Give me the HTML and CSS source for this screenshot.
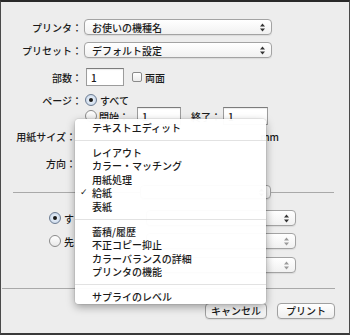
FILE: index.html
```html
<!DOCTYPE html>
<html lang="ja">
<head>
    <meta charset="UTF-8">
    <title>プリント</title>
    <link rel="stylesheet" href="styles.css">
</head>
<body>
    <div class="window">
        <!-- Printer / preset -->
        <div class="row r-printer">
            <span class="label">プリンタ：</span>
            <div class="popup wide">
                <span class="popup-text">お使いの機種名</span>
                <svg class="arrows" width="5" height="9" viewBox="0 0 5 9"><path d="M0 3.6L2.5 0.4L5 3.6Z M0 5.4L2.5 8.6L5 5.4Z"/></svg>
            </div>
        </div>
        <div class="row r-preset">
            <span class="label">プリセット：</span>
            <div class="popup wide">
                <span class="popup-text">デフォルト設定</span>
                <svg class="arrows" width="5" height="9" viewBox="0 0 5 9"><path d="M0 3.6L2.5 0.4L5 3.6Z M0 5.4L2.5 8.6L5 5.4Z"/></svg>
            </div>
        </div>

        <!-- Copies / pages -->
        <div class="row r-copies">
            <span class="label">部数：</span>
            <div class="field copies">1</div>
            <span class="check"></span>
            <span class="after-box">両面</span>
        </div>
        <div class="row r-pages">
            <span class="label">ページ：</span>
            <span class="radio on"></span>
            <span class="after-box">すべて</span>
        </div>
        <div class="row r-range">
            <span class="label"></span>
            <span class="radio"></span>
            <span class="range-text">開始：</span>
            <div class="field from">1</div>
            <span class="range-text to-label">終了：</span>
            <div class="field to">1</div>
        </div>

        <!-- Paper -->
        <div class="row r-paper">
            <span class="label short">用紙サイズ：</span>
            <span class="paper-value">mm</span>
        </div>
        <div class="row r-orient">
            <span class="label short">方向：</span>
        </div>

        <!-- Panel selector (its menu is open) -->
        <div class="row r-section">
            <span class="rule grow"></span>
            <div class="popup panel">
                <span class="popup-text"></span>
                <svg class="arrows" width="5" height="9" viewBox="0 0 5 9"><path d="M0 3.6L2.5 0.4L5 3.6Z M0 5.4L2.5 8.6L5 5.4Z"/></svg>
            </div>
            <span class="rule right"></span>
        </div>

        <div class="row r-feed1">
            <span class="radio on indent"></span>
            <span class="after-box">す</span>
            <div class="popup tray">
                <span class="popup-text"></span>
                <svg class="arrows" width="5" height="9" viewBox="0 0 5 9"><path d="M0 3.6L2.5 0.4L5 3.6Z M0 5.4L2.5 8.6L5 5.4Z"/></svg>
            </div>
        </div>
        <div class="row r-feed2">
            <span class="radio indent"></span>
            <span class="after-box">先</span>
            <div class="popup tray dim">
                <span class="popup-text"></span>
                <svg class="arrows" width="5" height="9" viewBox="0 0 5 9"><path d="M0 3.6L2.5 0.4L5 3.6Z M0 5.4L2.5 8.6L5 5.4Z"/></svg>
            </div>
        </div>
        <div class="row r-feed3">
            <div class="popup tray dim">
                <span class="popup-text"></span>
                <svg class="arrows" width="5" height="9" viewBox="0 0 5 9"><path d="M0 3.6L2.5 0.4L5 3.6Z M0 5.4L2.5 8.6L5 5.4Z"/></svg>
            </div>
        </div>

        <div class="bottom-rule"></div>

        <div class="row r-buttons">
            <button class="btn cancel">キャンセル</button>
            <button class="btn print">プリント</button>
        </div>

        <!-- Open panel menu -->
        <div class="menu">
            <div class="item">テキストエディット</div>
            <div class="sep"></div>
            <div class="item">レイアウト</div>
            <div class="item">カラー・マッチング</div>
            <div class="item">用紙処理</div>
            <div class="item checked">給紙</div>
            <div class="item">表紙</div>
            <div class="sep"></div>
            <div class="item">蓄積/履歴</div>
            <div class="item">不正コピー抑止</div>
            <div class="item">カラーバランスの詳細</div>
            <div class="item">プリンタの機能</div>
            <div class="sep"></div>
            <div class="item">サプライのレベル</div>
        </div>
    </div>
</body>
</html>
```

FILE: styles.css
```css
* {
    margin: 0;
    padding: 0;
    box-sizing: border-box;
}

body {
    font-family: "Noto Sans CJK JP", "DejaVu Sans", sans-serif;
    font-size: 10px;
    font-weight: 500;
    color: #1a1a1a;
    background: #ececec;
}

.window {
    position: relative;
    width: 350px;
    height: 335px;
    background: #ededed;
    border: 1px solid #4a4a4a;
    border-top: 2px solid #2a2a2a;
    border-bottom: 2px solid #3a3a3a;
    display: flex;
    flex-direction: column;
}

.row {
    display: flex;
    align-items: center;
    flex-shrink: 0;
}

.label {
    width: 81px;
    text-align: right;
    white-space: nowrap;
    flex-shrink: 0;
}

.label.short {
    width: 75px;
}

/* vertical rhythm */
.r-printer { margin-top: 17px; height: 16px; }
.r-preset { margin-top: 7px; height: 16px; }
.r-copies { margin-top: 10px; height: 18px; }
.r-pages { margin-top: 7px; height: 14px; }
.r-range { height: 18px; }
.r-paper { margin-top: 4px; height: 14px; }
.r-orient { margin-top: 13px; height: 14px; }
.r-section { margin-top: 15px; height: 14px; padding: 0 15px 0 12px; }
.r-feed1 { margin-top: 11px; height: 16px; }
.r-feed2 { margin-top: 7px; height: 16px; }
.r-feed3 { margin-top: 8px; height: 16px; }
.r-buttons { margin-top: 14px; height: 16px; justify-content: flex-end; padding-right: 14px; gap: 10px; }

/* popup buttons */
.popup {
    display: flex;
    align-items: center;
    height: 16px;
    padding: 0 6px 0 7px;
    background: linear-gradient(#ffffff, #f1f1f1);
    border: 1px solid #a3a3a3;
    border-radius: 4px;
    box-shadow: 0 1px 1px rgba(0, 0, 0, 0.08);
}

.popup-text {
    flex: 1;
    white-space: nowrap;
}

.arrows {
    fill: #333;
}

.popup.wide {
    margin-left: 2px;
    width: 188px;
}

.popup.panel {
    width: 131px;
    height: 14px;
}

.popup.tray {
    margin-left: auto;
    margin-right: 53px;
    width: 150px;
}

.popup.dim .arrows {
    fill: #9a9a9a;
}

/* text fields */
.field {
    height: 18px;
    padding: 1px 0 0 4px;
    background: #fff;
    border: 1px solid #9c9c9c;
    border-top-color: #7c7c7c;
    box-shadow: inset 0 1px 1px rgba(0, 0, 0, 0.08);
    line-height: 15px;
}

.field.copies {
    margin-left: 4px;
    width: 38px;
}

.field.from {
    margin-left: 8px;
    width: 44px;
}

.field.to {
    margin-left: 2px;
    width: 45px;
}

.range-text {
    margin-left: 2px;
    width: 30px;
    white-space: nowrap;
}

.range-text.to-label {
    margin-left: 10px;
}

/* checkbox and radios */
.check {
    width: 10px;
    height: 10px;
    margin-left: 8px;
    border: 1px solid #8a8a8a;
    border-radius: 2px;
    background: linear-gradient(#fff, #ececec);
}

.radio {
    position: relative;
    width: 12px;
    height: 12px;
    margin-left: 3px;
    border: 1px solid #8a8a8a;
    border-radius: 50%;
    background: linear-gradient(#fff, #e8e8e8);
    flex-shrink: 0;
}

.radio.on {
    border-color: #6d7d93;
    background: radial-gradient(circle, #e6eef8 30%, #b9cbe2 100%);
}

.radio.on::after {
    content: "";
    position: absolute;
    left: 3px;
    top: 3px;
    width: 4px;
    height: 4px;
    border-radius: 50%;
    background: #1a1a1a;
}

.radio.indent {
    margin-left: 48px;
}

.after-box {
    margin-left: 3px;
    white-space: nowrap;
}

.paper-value {
    margin-left: auto;
    margin-right: 70px;
    white-space: nowrap;
}

/* separators */
.rule {
    height: 1px;
    background: #a9a9a9;
}

.rule.grow {
    flex: 1;
}

.rule.right {
    width: 63px;
}

.bottom-rule {
    margin: 15px 14px 0 1px;
    height: 1px;
    background: #a9a9a9;
    flex-shrink: 0;
}

/* push buttons */
.btn {
    height: 16px;
    font-family: inherit;
    font-size: 10px;
    font-weight: 500;
    color: #1a1a1a;
    background: linear-gradient(#ffffff, #eeeeee);
    border: 1px solid #a0a0a0;
    border-radius: 4px;
    box-shadow: 0 1px 1px rgba(0, 0, 0, 0.08);
    line-height: 14px;
}

.btn.cancel {
    width: 62px;
}

.btn.print {
    width: 58px;
}

/* open menu */
.menu {
    position: absolute;
    left: 74px;
    top: 117px;
    width: 191px;
    height: 185px;
    padding-top: 2px;
    background: rgba(255, 255, 255, 0.97);
    border-radius: 4px;
    box-shadow: 0 3px 9px rgba(0, 0, 0, 0.35), 0 0 0 1px rgba(0, 0, 0, 0.06);
}

.item {
    position: relative;
    height: 13.6px;
    line-height: 13.6px;
    padding-left: 17px;
    white-space: nowrap;
}

.item.checked::before {
    content: "✓";
    position: absolute;
    left: 5px;
    font-family: "DejaVu Sans", sans-serif;
    font-size: 9px;
}

.sep {
    height: 1px;
    margin: 5px 0;
    background: #e2e2e2;
}
```
